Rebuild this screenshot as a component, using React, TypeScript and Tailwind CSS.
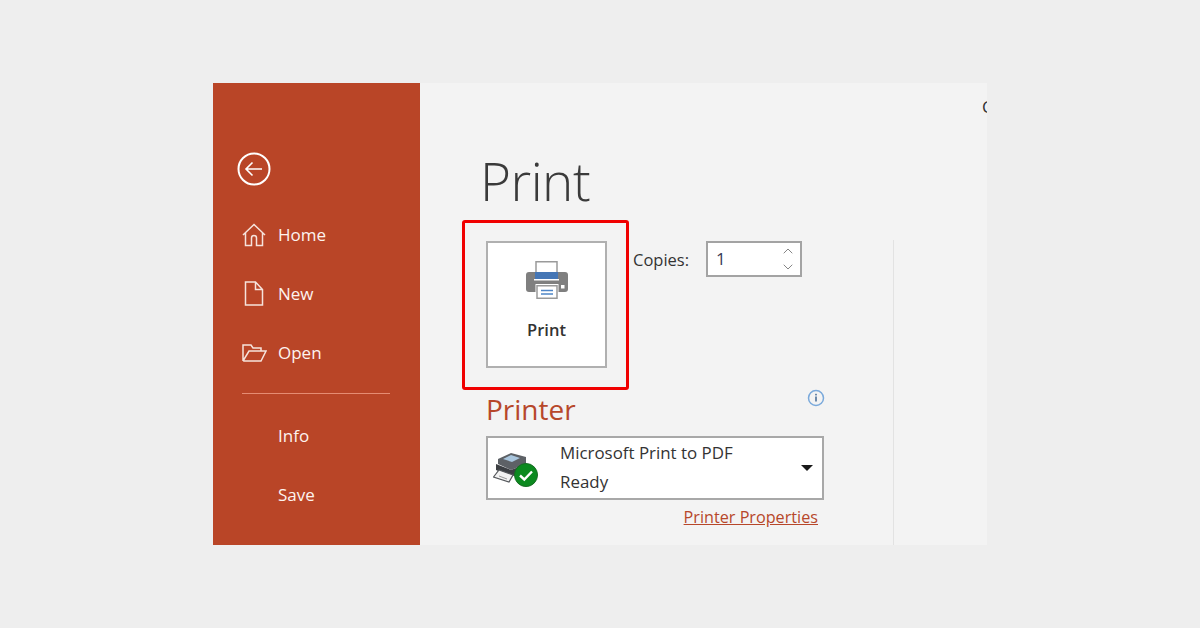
import { ReactNode } from 'react';
import { ChevronDown, ChevronUp } from 'lucide-react';

function BackIcon() {
  return (
    <svg width="34" height="34" viewBox="0 0 34 34" fill="none" stroke="#fff" strokeWidth="2">
      <circle cx="17" cy="17" r="15.5" />
      <path d="M25 17H9M15.5 10.5 9 17l6.5 6.5" strokeWidth="1.6" />
    </svg>
  );
}

function HomeIcon() {
  return (
    <svg width="24" height="24" viewBox="0 0 24 24" fill="none" stroke="#f6e3dc" strokeWidth="1.5">
      <path d="M1 12 12 1.5 23 12M3.5 10v12.5h6V15a2.5 2.5 0 0 1 5 0v7.500h6V10" />
    </svg>
  );
}

function NewIcon() {
  return (
    <svg width="20" height="25" viewBox="0 0 20 25" fill="none" stroke="#f6e3dc" strokeWidth="1.5">
      <path d="M1.500 1v23h17V8.500L11.500 1zM11.500 1v7.500h7" />
    </svg>
  );
}

function OpenIcon() {
  return (
    <svg width="25" height="18" viewBox="0 0 25 18" fill="none" stroke="#f6e3dc" strokeWidth="1.5">
      <path d="M1 17V1h8l2 3h8v3M1 17h18l5-10H7L1 17" />
    </svg>
  );
}

function PrinterIcon() {
  return (
    <svg width="42" height="38" viewBox="0 0 42 38">
      <rect x="0" y="11" width="42" height="20" rx="3" fill="#7f7f7f" />
      <rect x="10" y="0.750" width="21" height="14" fill="#fff" stroke="#9a9a9a" strokeWidth="1.500" />
      <rect x="9" y="11" width="23" height="7" fill="#4576b5" />
      <rect x="8" y="18" width="25" height="1.500" fill="#fff" />
      <rect x="9.500" y="23" width="23" height="15" fill="#fff" />
      <rect x="11" y="24.750" width="20" height="12.500" fill="#fff" stroke="#9a9a9a" strokeWidth="1.500" />
      <path d="M15 29.500h12M15 33h12" stroke="#4f86c6" strokeWidth="1.300" />
      <rect x="35" y="24" width="3.500" height="3.500" fill="#fff" />
    </svg>
  );
}

function ReadyPrinterIcon() {
  return (
    <svg width="46" height="36" viewBox="0 0 46 36">
      <path d="M5 7 18 1l15 4v7L18 18 5 12z" fill="#5d6166" />
      <path d="M10 7 18 3l9 3-8 4z" fill="#a9c6de" />
      <path d="M3 12 18 18l15-6v6L18 25 3 18z" fill="#3c3f43" />
      <path d="M0.500 25 6 18l14 5-4 7z" fill="#f2f2f2" stroke="#54575b" strokeWidth="1.200" />
      <path d="M6 24l8 3" stroke="#9a9a9a" strokeWidth="1" />
      <circle cx="33" cy="23" r="11.500" fill="#0b8a1f" stroke="#176b23" strokeWidth="1" />
      <path d="M27 23.500l4.300 4L39 19.500" fill="none" stroke="#fff" strokeWidth="2.400" />
    </svg>
  );
}

function InfoIcon() {
  return (
    <svg width="18" height="18" viewBox="0 0 18 18" fill="none">
      <circle cx="9" cy="9" r="7.500" stroke="#7aa9db" strokeWidth="1.500" />
      <rect x="8.200" y="7.500" width="1.600" height="5" fill="#4a6f9a" />
      <rect x="8.200" y="4.800" width="1.600" height="1.600" fill="#4a6f9a" />
    </svg>
  );
}

function NavItem({ icon, label }: { icon?: ReactNode; label: string }) {
  return (
    <div className="flex h-[59px] items-center text-[17px] font-medium text-[#fdf3ef]">
      <div className="flex w-[65px] items-center justify-center pl-[17px]">{icon}</div>
      <span>{label}</span>
    </div>
  );
}

export default function App() {
  return (
    <div className="h-[628px] w-[1200px] overflow-hidden bg-[#eeeeee] pl-[213px] pt-[83px] font-['Open_Sans',sans-serif]">
      <div className="flex h-[462px] w-[774px] overflow-hidden bg-[#f3f3f3]">
        {/* Sidebar */}
        <div className="w-[207px] shrink-0 bg-[#b94527]">
          <div className="pl-[24px] pt-[69px]">
            <BackIcon />
          </div>
          <div className="mt-[19px]">
            <NavItem icon={<HomeIcon />} label="Home" />
            <NavItem icon={<NewIcon />} label="New" />
            <NavItem icon={<OpenIcon />} label="Open" />
          </div>
          <div className="ml-[29px] mt-[11px] h-[1px] w-[148px] bg-[#e58c73]" />
          <div className="mt-[12px]">
            <NavItem label="Info" />
            <NavItem label="Save" />
          </div>
        </div>

        {/* Main */}
        <div className="w-[567px] shrink-0 overflow-hidden">
          <div className="flex h-[137px]">
            <div className="w-[562px] shrink-0 pl-[60px] pt-[60px] text-[53px] font-light leading-[76px] tracking-[-0.5px] text-[#3a3a3a]">
              Print
            </div>
            <div className="pt-[12px] text-[17px] leading-[24px] text-[#333]">C</div>
          </div>

          <div className="flex">
            <div className="w-[473px] shrink-0 pl-[42px]">
              <div className="flex items-start">
                <div className="h-[170px] w-[167px] rounded-[3px] border-[3px] border-[#f00000] pl-[21px] pt-[18px]">
                  <div className="flex h-[127px] w-[121px] flex-col items-center border-2 border-[#b0b0b0] bg-white pt-[18px]">
                    <PrinterIcon />
                    <div className="mt-[19px] text-[16.500px] font-semibold leading-[24px] text-[#333]">Print</div>
                  </div>
                </div>
                <div className="ml-[4px] mt-[21px] flex items-center">
                  <div className="w-[73px] pt-[3px] text-[16.500px] text-[#333]">Copies:</div>
                  <div className="flex h-[36px] w-[96px] items-center justify-between border-2 border-[#a3a3a3] bg-white pl-[8px] pr-[4px]">
                    <span className="text-[17px] text-[#3a3a55]">1</span>
                    <div className="flex flex-col items-center">
                      <ChevronUp size={16} strokeWidth={1.2} color="#666" />
                      <ChevronDown size={16} strokeWidth={1.2} color="#666" />
                    </div>
                  </div>
                </div>
              </div>

              <div className="ml-[24px] mt-[-1px] w-[338px]">
                <div className="flex h-[47px] items-start justify-between">
                  <div className="text-[28px] leading-[40px] text-[#b7472a]">Printer</div>
                  <div className="mr-[-1px]">
                    <InfoIcon />
                  </div>
                </div>
                <div className="flex h-[64px] items-center border-2 border-[#a8a8a8] bg-white">
                  <div className="w-[72px] pl-[5px] pt-[3px]">
                    <ReadyPrinterIcon />
                  </div>
                  <div className="flex-1 pb-[2px] text-[16.900px] leading-[29px] text-[#333]">
                    <div>Microsoft Print to PDF</div>
                    <div>Ready</div>
                  </div>
                  <div className="mr-[9px] h-0 w-0 border-x-[6px] border-t-[6px] border-x-transparent border-t-[#1a1a1a]" />
                </div>
                <div className="mt-[5px] pr-[6px] text-right text-[16.200px] leading-[24px] text-[#b7472a] underline">
                  Printer Properties
                </div>
              </div>
            </div>
            <div className="mt-[20px] h-[305px] w-[1px] shrink-0 bg-[#e2e2e2]" />
          </div>
        </div>
      </div>
    </div>
  );
}
